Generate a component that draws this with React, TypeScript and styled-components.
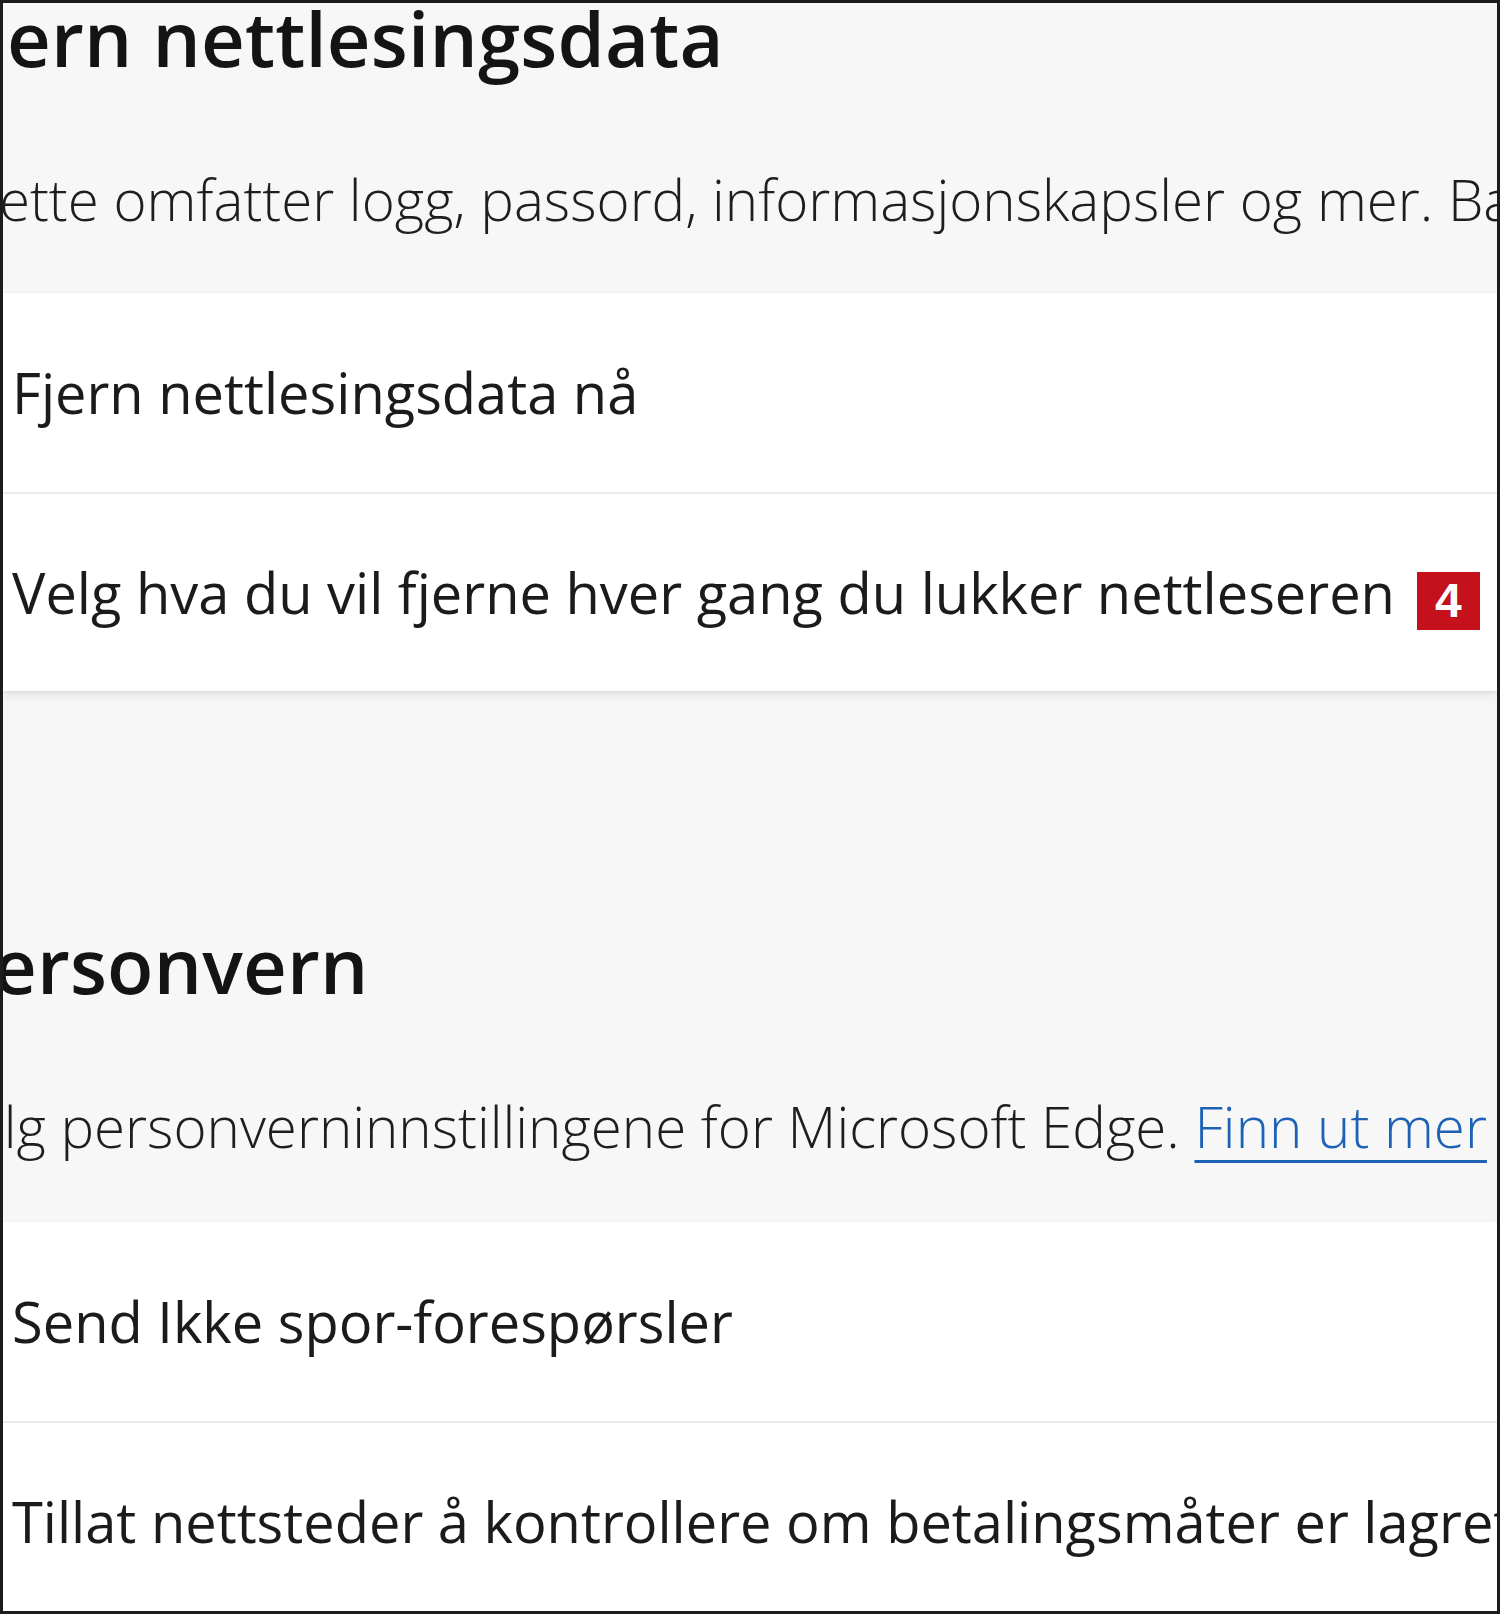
import styled, { createGlobalStyle } from 'styled-components';

const GlobalStyle = createGlobalStyle`
  html, body {
    margin: 0;
    padding: 0;
    background: #f7f7f7;
  }
  body {
    font-family: 'Open Sans', 'Noto Sans', 'Liberation Sans', sans-serif;
  }
`;

const Frame = styled.div`
  width: 1500px;
  height: 1614px;
  box-sizing: border-box;
  border: 3px solid #1c1c1c;
  background-color: #f7f7f7;
  overflow: hidden;
`;

const Section = styled.section<{ $top: number }>`
  margin-top: ${(p) => p.$top}px;
`;

const Heading = styled.h2<{ $offset: number }>`
  margin: 0 0 0 ${(p) => p.$offset}px;
  font-size: 76px;
  line-height: 100px;
  font-weight: 600;
  color: #141414;
  white-space: nowrap;
  letter-spacing: 0.2px;
`;

const Description = styled.p<{ $offset: number }>`
  margin: 75px 0 0 ${(p) => p.$offset}px;
  font-size: 56.5px;
  line-height: 74px;
  font-weight: 300;
  color: #1e1e1e;
  white-space: nowrap;
`;

const Link = styled.a`
  color: #1d62b5;
  text-decoration: underline;
  text-decoration-thickness: 3px;
  text-underline-offset: 12px;
`;

const Card = styled.div<{ $gap: number }>`
  margin-top: ${(p) => p.$gap}px;
  background-color: #ffffff;
  box-shadow: 0 5px 10px rgba(0, 0, 0, 0.07), 0 1px 3px rgba(0, 0, 0, 0.08);
`;

const Row = styled.div`
  display: flex;
  align-items: center;
  gap: 22px;
  height: 199px;
  box-sizing: border-box;
  padding-left: 9px;
  white-space: nowrap;

  & + & {
    border-top: 2px solid #ebebeb;
  }
`;

const RowLabel = styled.span`
  font-size: 56px;
  line-height: 75px;
  color: #1b1b1b;
`;

const Badge = styled.span`
  display: inline-flex;
  align-items: center;
  justify-content: center;
  width: 63px;
  height: 58px;
  margin-top: 16px;
  background-color: #c4111b;
  color: #ffffff;
  font-family: 'Liberation Sans', Arial, sans-serif;
  font-weight: 700;
  font-size: 48px;
`;

const App = () => {
  return (
    <>
      <GlobalStyle />
      <Frame>
        <Section $top={-15}>
          <Heading $offset={-58}>Fjern nettlesingsdata</Heading>
          <Description $offset={-44}>
            Dette omfatter logg, passord, informasjonskapsler og mer. Bare data fra denne profilen blir slettet.
          </Description>
          <Card $gap={56}>
            <Row>
              <RowLabel>Fjern nettlesingsdata nå</RowLabel>
            </Row>
            <Row>
              <RowLabel>Velg hva du vil fjerne hver gang du lukker nettleseren</RowLabel>
              <Badge>4</Badge>
            </Row>
          </Card>
        </Section>
        <Section $top={224}>
          <Heading $offset={-57}>Personvern</Heading>
          <Description $offset={-63}>
            Velg personverninnstillingene for Microsoft Edge. <Link href="#">Finn ut mer</Link>
          </Description>
          <Card $gap={58}>
            <Row>
              <RowLabel>Send Ikke spor-forespørsler</RowLabel>
            </Row>
            <Row>
              <RowLabel>Tillat nettsteder å kontrollere om betalingsmåter er lagret</RowLabel>
            </Row>
          </Card>
        </Section>
      </Frame>
    </>
  );
};

export default App;
